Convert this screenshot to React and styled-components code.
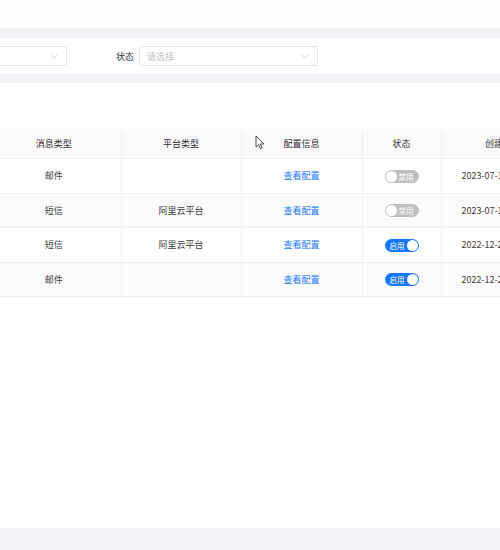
import React from 'react';
import styled, { createGlobalStyle } from 'styled-components';

const GlobalStyle = createGlobalStyle`
  body {
    margin: 0;
    background: #f0f2f5;
    font-family: "Noto Sans CJK SC", "Noto Sans", sans-serif;
    overflow: hidden;
  }
`

const rows = [
  { type: '邮件', platform: '', on: false, date: '2023-07-11 10:20:35' },
  { type: '短信', platform: '阿里云平台', on: false, date: '2023-07-11 10:18:02' },
  { type: '短信', platform: '阿里云平台', on: true, date: '2022-12-26 16:40:12' },
  { type: '邮件', platform: '', on: true, date: '2022-12-26 16:38:47' },
]

export default function App() {
  return (
    <>
      <GlobalStyle />
      <Page>
        <TopBar />
        <FilterPanel>
          <FilterRow>
            <FilterItem>
              <Label>消息类型</Label>
              <Select>
                <span></span>
                <Chevron />
              </Select>
            </FilterItem>
            <FilterItem>
              <Label>状态</Label>
              <Select>
                <Placeholder>请选择</Placeholder>
                <Chevron />
              </Select>
            </FilterItem>
          </FilterRow>
        </FilterPanel>
        <ContentPanel>
          <Table>
            <colgroup>
              <col style={{ width: 134 }} />
              <col style={{ width: 120 }} />
              <col style={{ width: 121 }} />
              <col style={{ width: 79 }} />
              <col style={{ width: 124 }} />
            </colgroup>
            <thead>
              <tr>
                <Th>消息类型</Th>
                <Th>平台类型</Th>
                <Th>配置信息</Th>
                <Th>状态</Th>
                <Th>创建时间</Th>
              </tr>
            </thead>
            <tbody>
              {rows.map((r, i) => (
                <Tr key={i} $striped={i % 2 === 1}>
                  <Td>{r.type}</Td>
                  <Td>{r.platform}</Td>
                  <Td><LinkText>查看配置</LinkText></Td>
                  <Td>
                    <Switch $on={r.on}>
                      <SwitchText $on={r.on}>{r.on ? '启用' : '禁用'}</SwitchText>
                      <Knob />
                    </Switch>
                  </Td>
                  <Td>{r.date}</Td>
                </Tr>
              ))}
            </tbody>
          </Table>
          <Cursor viewBox="0 0 10 15">
            <path d="M1 1 L1 12 L3.6 9.6 L5.4 13.6 L7 12.9 L5.3 9 L8.8 9 Z" fill="#fff" stroke="#333" strokeWidth="0.9" strokeLinejoin="round" />
          </Cursor>
        </ContentPanel>
        <BottomBar />
      </Page>
    </>
  )
}

function Chevron() {
  return (
    <ChevronSvg viewBox="0 0 10 6">
      <path d="M1 1 L5 5 L9 1" fill="none" stroke="#bfbfbf" strokeWidth="0.9" />
    </ChevronSvg>
  )
}

const Page = styled.div`
  height: 550px;
  width: 500px;
  display: flex;
  flex-direction: column;
  background: #f0f2f5;
  overflow: hidden;
`

const TopBar = styled.div`
  height: 28px;
  background: #fcfdfc;
`

const FilterPanel = styled.div`
  margin-top: 10px;
  height: 36px;
  background: #fff;
  display: flex;
  align-items: center;
`

const FilterRow = styled.div`
  display: flex;
  align-items: center;
  gap: 49px;
  margin-left: -153px;
`

const FilterItem = styled.div`
  display: flex;
  align-items: center;
  gap: 5px;
`

const Label = styled.span`
  font-size: 9px;
  color: #333;
  white-space: nowrap;
`

const Select = styled.div`
  width: 179px;
  height: 20px;
  box-sizing: border-box;
  border: 1px solid #e4e6ea;
  border-radius: 2px;
  background: #fff;
  display: flex;
  align-items: center;
  justify-content: space-between;
  padding: 0 8px 0 7px;
`

const Placeholder = styled.span`
  font-size: 9px;
  color: #bfbfbf;
`

const ChevronSvg = styled.svg`
  width: 8px;
  height: 5px;
`

const ContentPanel = styled.div`
  position: relative;
  margin-top: 9px;
  height: 445px;
  background: #fff;
  padding-top: 46px;
  box-sizing: border-box;
`

const Table = styled.table`
  margin-left: -13px;
  border-collapse: collapse;
  table-layout: fixed;
  width: 578px;
  font-size: 9px;
  color: #3a3a3a;
`

const Th = styled.th`
  height: 29px;
  padding: 0;
  font-weight: 400;
  color: #2f2f2f;
  background: #fafafa;
  border-right: 1px solid #f0f0f0;
  border-bottom: 1px solid #f0f0f0;
  text-align: center;
  white-space: nowrap;
`

const Tr = styled.tr`
  background: ${p => (p.$striped ? '#fbfbfb' : '#fff')};
`

const Td = styled.td`
  height: 33.5px;
  padding: 0;
  text-align: center;
  white-space: nowrap;
  overflow: hidden;
  border-right: 1px solid #f3f3f3;
  border-bottom: 1px solid #f0f0f0;
`

const LinkText = styled.span`
  color: #1677ff;
  cursor: pointer;
`

const Switch = styled.span`
  display: inline-flex;
  align-items: center;
  flex-direction: ${p => (p.$on ? 'row' : 'row-reverse')};
  justify-content: space-between;
  vertical-align: middle;
  width: 34px;
  height: 13px;
  box-sizing: border-box;
  padding: 0 1px;
  border-radius: 7px;
  background: ${p => (p.$on ? '#1677ff' : '#bfbfbf')};
`

const SwitchText = styled.span`
  font-size: 7.5px;
  line-height: 1;
  color: #fff;
  margin: ${p => (p.$on ? '0 0 0 4px' : '0 4px 0 0')};
`

const Knob = styled.span`
  width: 11px;
  height: 11px;
  border-radius: 50%;
  background: #fff;
`

const Cursor = styled.svg`
  position: absolute;
  left: 255px;
  top: 52px;
  width: 10px;
  height: 15px;
`

const BottomBar = styled.div`
  flex: 1;
  background: #f0f2f5;
`
